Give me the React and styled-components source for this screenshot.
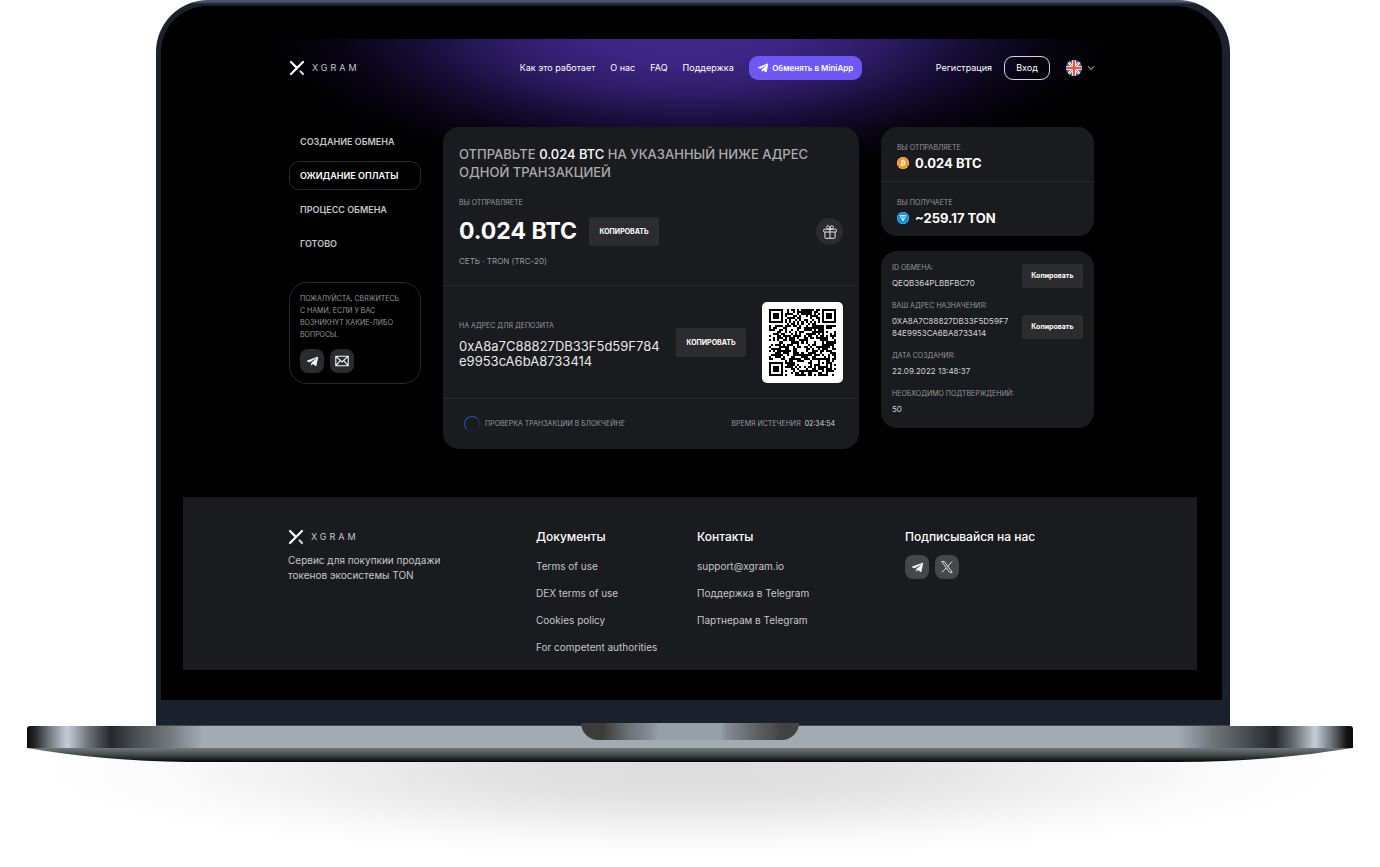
import React from "react";
import styled, { createGlobalStyle, css, keyframes } from "styled-components";
import { FaTelegramPlane, FaBitcoin } from "react-icons/fa";

const color = {
  panel: "#1a1b1e",
  control: "#2c2c2e",
  line: "#29292c",
  text: "#ffffff",
  soft: "#c6c6c8",
  muted: "#98989b",
  accent: "#6f57f6",
};

const GlobalStyle = createGlobalStyle`
  *, *::before, *::after { box-sizing: border-box; }
  body {
    margin: 0;
    background: #fff;
    color: ${color.text};
    font-family: Inter, "Open Sans", "Liberation Sans", sans-serif;
    font-size: 9px;
    line-height: 12px;
  }
  h1, h2, p, ul, dl, dd { margin: 0; padding: 0; }
  ul { list-style: none; }
  a { color: inherit; text-decoration: none; }
  button { font: inherit; color: inherit; border: 0; padding: 0; background: none; cursor: pointer; }
`;

/* Laptop */

const Page = styled.div`
  position: relative;
  padding: 0 27px 105px;
  overflow: hidden;
`;

const FloorShadow = styled.div`
  position: absolute;
  z-index: -1;
  left: 3%;
  right: 3%;
  bottom: 8px;
  height: 176px;
  background: radial-gradient(ellipse closest-side, #dcdcdc, #e2e2e2 30%, #efefef 58%, #fafafa 80%, #fff);
`;

const Lid = styled.div`
  margin: 0 123px 0 129px;
  padding: 6px 8px 25px 5px;
  border-radius: 52px 52px 0 0;
  background: linear-gradient(#4a5568, #4a5568 2px, #1a202c 4px);
  border-bottom: 1px solid #3f4859;
`;

const Screen = styled.div`
  padding: 33px 25px 30px 22px;
  border-radius: 46px 46px 0 0;
  background: #000;
`;

const Deck = styled.div`
  position: relative;
  height: 22px;
  border-radius: 3px 3px 0 0;
  background: linear-gradient(
    90deg,
    #0b0b0e 0, #25272a 8px, #6f777c 22px, #c5ced8 40px, #6b7176 62px, #25262a 84px,
    #4c5254 110px, #727779 142px, #838b94 154px, #a3abb2 176px,
    #a3abb2 calc(100% - 176px), #838b94 calc(100% - 154px), #727779 calc(100% - 142px),
    #4c5254 calc(100% - 110px), #25262a calc(100% - 78px), #6b7176 calc(100% - 58px),
    #c5ced8 calc(100% - 38px), #6f777c calc(100% - 22px), #111114 calc(100% - 6px), #0b0b0e 100%
  );
`;

const Notch = styled.div`
  position: absolute;
  top: -3px;
  left: 50%;
  width: 218px;
  height: 17px;
  transform: translateX(-50%);
  border-radius: 0 0 18px 18px;
  background: linear-gradient(90deg, #3d3c39 10%, #6c7276 22%, #838b94 31%, #96a1a7 36%, #96a1a7 64%, #838b94 67%, #5f6366 80%, #434345 92%);
`;

const Underside = styled.svg`
  display: block;
  width: 100%;
  height: 14px;
`;

/* Site shell */

const Site = styled.div`
  background: radial-gradient(
    ellipse 430px 150px at 50% -12px,
    #402889 0, #3c2584 25%, #2c1b64 46%, #160d36 65%, #080414 82%, #000 100%
  ) no-repeat;
`;

const Header = styled.header`
  display: flex;
  align-items: center;
  padding: 16px 102px 0 106px;
  height: 42px;
`;

const Logo = styled.a`
  display: flex;
  align-items: center;
  gap: 7px;
  font-size: 9px;
  letter-spacing: 3px;
  color: ${color.soft};
  svg { flex: none; }
`;

const Nav = styled.nav`
  display: flex;
  align-items: center;
  gap: 15px;
  margin: 0 auto 0 160px;
  white-space: nowrap;
`;

const MiniAppButton = styled.button`
  display: flex;
  align-items: center;
  justify-content: center;
  gap: 3px;
  width: 113px;
  height: 24px;
  border-radius: 9px;
  background: ${color.accent};
  font-size: 8px;
  font-weight: 600;
  white-space: nowrap;
`;

const Account = styled.div`
  display: flex;
  align-items: center;
  gap: 12px;
`;

const LoginButton = styled.button`
  width: 46px;
  height: 24px;
  border: 1px solid #d6d6d8;
  border-radius: 9px;
`;

const LanguageButton = styled.button`
  display: flex;
  align-items: center;
  gap: 5px;
  margin-left: 4px;
`;

const Main = styled.main`
  display: grid;
  grid-template-columns: 132px minmax(0, 1fr) 213px;
  gap: 22px;
  align-items: start;
  padding: 46px 103px 48px 106px;
`;

/* Steps */

const Steps = styled.ol`
  display: grid;
  gap: 5px;
  margin: 0 0 24px;
  padding: 0;
  list-style: none;
`;

const Step = styled.li`
  height: 29px;
  padding: 0 10px;
  border: 1px solid transparent;
  border-radius: 10px;
  line-height: 27px;
  font-weight: 600;
  color: ${color.soft};
  white-space: nowrap;
  ${(p) => p.$active && css`
    border-color: ${color.line};
    color: ${color.text};
  `}
`;

const ContactBox = styled.section`
  padding: 10px;
  border: 1px solid ${color.line};
  border-radius: 18px;
  font-size: 7px;
  color: ${color.muted};
`;

const IconRow = styled.div`
  display: flex;
  gap: 6px;
  margin-top: ${(p) => p.$top}px;
`;

const IconLink = styled.a`
  display: grid;
  place-items: center;
  width: 24px;
  height: 24px;
  border-radius: 8px;
  background: ${(p) => (p.$light ? "#464749" : color.control)};
  color: #f1f7f4;
`;

/* Cards */

const Card = styled.section`
  border-radius: 16px;
  background: ${color.panel};
`;

const CardPart = styled.div`
  padding: ${(p) => p.$pad};
  & + & { border-top: 1px solid ${color.line}; }
`;

const Label = styled.p`
  font-size: 7px;
  line-height: 12px;
  color: ${color.muted};
`;

const Instruction = styled.h1`
  margin-bottom: 16px;
  font-size: 13px;
  line-height: 18px;
  font-weight: 500;
  color: #acacae;
  strong { font-weight: 500; color: ${color.text}; }
`;

const AmountRow = styled.div`
  display: flex;
  align-items: center;
  gap: 12px;
  margin: 8px 0 9px;
`;

const Amount = styled.p`
  font-size: 23px;
  line-height: 29px;
  font-weight: 700;
`;

const CopyButton = styled.button`
  flex: none;
  width: ${(p) => (p.$small ? 61 : 70)}px;
  height: ${(p) => (p.$small ? 24 : 29)}px;
  border-radius: 2px;
  background: ${color.control};
  font-size: 7px;
  font-weight: 700;
`;

const GiftButton = styled.button`
  display: grid;
  place-items: center;
  width: 27px;
  height: 27px;
  margin-left: auto;
  border-radius: 50%;
  background: ${color.control};
`;

const Network = styled.p`
  font-size: 8px;
  color: ${color.muted};
`;

const DepositRow = styled.div`
  display: flex;
  align-items: center;
  gap: 16px;
`;

const Deposit = styled.div`
  flex: 1;
  min-width: 0;
  padding-top: 3px;
`;

const Address = styled.p`
  margin-top: 7px;
  font-size: 13px;
  line-height: 15px;
  overflow-wrap: anywhere;
  color: #e8e8e9;
`;

const QrFrame = styled.div`
  display: grid;
  place-items: center;
  width: 81px;
  height: 81px;
  border-radius: 5px;
  background: #fff;
`;

const StatusRow = styled.div`
  display: flex;
  align-items: center;
  gap: 5px;
  time { color: #d4d4d6; }
`;

const turn = keyframes`to { transform: rotate(360deg); }`;

const Spinner = styled.span`
  width: 16px;
  height: 16px;
  border-radius: 50%;
  border: 1px solid #1d57bd;
  border-bottom-color: #15233f;
  border-right-color: #1b3157;
  animation: ${turn} 12s linear infinite paused;
`;

const Timer = styled.div`
  display: flex;
  gap: 4px;
  margin-left: auto;
`;

const Aside = styled.aside`
  display: grid;
  gap: 15px;
`;

const CoinValue = styled.p`
  display: flex;
  align-items: center;
  gap: 6px;
  font-size: 13px;
  line-height: 18px;
  font-weight: 700;
`;

const CoinBadge = styled.span`
  display: grid;
  place-items: center;
  width: 12px;
  height: 12px;
  border-radius: 50%;
  background: #fff;
`;

const Details = styled.dl`
  display: grid;
  gap: 11px;
  padding: 11px 11px 13px;
`;

const Detail = styled.div`
  display: flex;
  align-items: ${(p) => (p.$tall ? "flex-end" : "center")};
  justify-content: space-between;
  height: ${(p) => (p.$tall ? 39 : 27)}px;
  dt { margin-bottom: 3px; font-size: 7px; color: ${color.muted}; white-space: nowrap; }
  dd { font-size: 8px; color: #d4d4d6; overflow-wrap: anywhere; }
`;

const DetailText = styled.div`
  flex: 0 1 119px;
`;

/* Footer */

const Footer = styled.footer`
  display: grid;
  grid-template-columns: 248px 161px 208px 1fr;
  padding: 32px 103px 9px 105px;
  background: ${color.panel};
`;

const About = styled.p`
  margin-top: 8px;
  font-size: 10px;
  line-height: 15px;
  color: ${color.soft};
`;

const FooterTitle = styled.h2`
  font-size: 12px;
  line-height: 16px;
  font-weight: 500;
`;

const FooterLinks = styled.ul`
  margin-top: 8px;
  font-size: 10px;
  line-height: 27px;
  color: ${color.soft};
`;

/* Drawings */

const LogoMark = () => (
  <svg width="16" height="16" viewBox="0 0 16 16" fill="none" stroke="#fff" strokeWidth="2.2" strokeLinecap="round" aria-hidden="true">
    <path d="M2 2l5.600 5.600M14 2L2 14" />
    <path d="M11.600 11.400l2.400 2.600" stroke="#d0d0d2" />
  </svg>
);

const FlagIcon = () => (
  <svg width="16" height="16" viewBox="0 0 16 16" aria-hidden="true">
    <clipPath id="flagRound"><circle cx="8" cy="8" r="8" /></clipPath>
    <g clipPath="url(#flagRound)">
      <path fill="#1c7cc0" d="M0 0h16v16H0z" />
      <path stroke="#fff" strokeWidth="2.6" d="M0 0l16 16M16 0L0 16" />
      <path stroke="#ef5340" strokeWidth=".9" d="M0 0l16 16M16 0L0 16" />
      <path stroke="#fff" strokeWidth="4" d="M8 0v16M0 8h16" />
      <path stroke="#ef5340" strokeWidth="2.4" d="M8 0v16M0 8h16" />
    </g>
  </svg>
);

const Chevron = () => (
  <svg width="8" height="6" viewBox="0 0 8 6" fill="none" stroke="#d6d6d8" aria-hidden="true">
    <path d="M1 1.200l3 3.200 3-3.200" />
  </svg>
);

const MailIcon = () => (
  <svg width="14" height="12" viewBox="0 0 14 12" fill="none" stroke="currentColor" strokeWidth="1.1" aria-hidden="true">
    <path d="M.8 1.200h12.400v9.600H.8zM.8 1.200L7 7l6.200-5.800M.8 10.800l4.400-5.200M13.200 10.800L8.800 5.600" />
  </svg>
);

const GiftIcon = () => (
  <svg width="14" height="14" viewBox="0 0 14 14" fill="none" stroke="#e6e6e8" strokeWidth="1" strokeLinejoin="round" aria-hidden="true">
    <rect x=".7" y="4.2" width="12.6" height="2.8" rx=".6" />
    <path d="M1.900 7v5.600a.7.7 0 0 0 .7.7h8.800a.7.7 0 0 0 .7-.7V7M7 4.200v9.100M7 4.200C5.600 4.200 3.600 3.700 3.600 2.300 3.600 1.300 4.300.7 5.100.7 6.500.7 7 2.500 7 4.200zM7 4.200c1.400 0 3.400-.5 3.400-1.900 0-1-.7-1.600-1.500-1.600C7.500.7 7 2.500 7 4.200z" />
  </svg>
);

const XIcon = () => (
  <svg width="12" height="12" viewBox="0 0 12 12" fill="none" stroke="currentColor" strokeWidth=".9" aria-hidden="true">
    <path d="M.8.600h2.600l7.800 10.800H8.600zM11 .6L6.500 5.600M5.300 6.800L1 11.400" />
  </svg>
);

const TonIcon = () => (
  <svg width="12" height="12" viewBox="0 0 12 12" aria-hidden="true">
    <circle cx="6" cy="6" r="6" fill="#0f93e0" />
    <path d="M3.100 3.500h5.800L6 8.900zM6 3.500v5.200" fill="none" stroke="#fff" strokeWidth=".8" strokeLinejoin="round" />
  </svg>
);

const QR_SIZE = 33;

const buildQrPath = () => {
  const finders = [[0, 0], [QR_SIZE - 7, 0], [0, QR_SIZE - 7]];
  let seed = 20259;
  let path = "";
  for (let y = 0; y < QR_SIZE; y += 1) {
    for (let x = 0; x < QR_SIZE; x += 1) {
      seed = (seed * 1103515245 + 12345) % 2147483648;
      let dark = seed / 2147483648 < 0.53;
      const finder = finders.find(([fx, fy]) => x >= fx - 1 && x <= fx + 7 && y >= fy - 1 && y <= fy + 7);
      if (finder) {
        const d = Math.max(Math.abs(x - finder[0] - 3), Math.abs(y - finder[1] - 3));
        dark = d === 3 || d <= 1;
      } else if (Math.abs(x - 26) <= 2 && Math.abs(y - 26) <= 2) {
        dark = Math.max(Math.abs(x - 26), Math.abs(y - 26)) !== 1;
      } else if (x === 6 || y === 6) {
        dark = (x + y) % 2 === 0;
      }
      if (dark) path += `M${x} ${y}h1v1h-1z`;
    }
  }
  return path;
};

const qrPath = buildQrPath();

const QrCode = () => (
  <svg width="67" height="67" viewBox="0 0 33 33" shapeRendering="crispEdges" role="img" aria-label="QR">
    <path d={qrPath} />
  </svg>
);

/* Content */

const steps = ["СОЗДАНИЕ ОБМЕНА", "ОЖИДАНИЕ ОПЛАТЫ", "ПРОЦЕСС ОБМЕНА", "ГОТОВО"];

const details = [
  { label: "ID ОБМЕНА:", value: "QEQB364PLBBFBC70", copy: true },
  { label: "ВАШ АДРЕС НАЗНАЧЕНИЯ:", value: "0XA8A7C88827DB33F5D59F784E9953CA6BA8733414", copy: true, tall: true },
  { label: "ДАТА СОЗДАНИЯ:", value: "22.09.2022 13:48:37" },
  { label: "НЕОБХОДИМО ПОДТВЕРЖДЕНИЙ:", value: "50" },
];

const footerColumns = [
  { title: "Документы", links: ["Terms of use", "DEX terms of use", "Cookies policy", "For competent authorities"] },
  { title: "Контакты", links: ["support@xgram.io", "Поддержка в Telegram", "Партнерам в Telegram"] },
];

const Brand = () => (
  <Logo href="#"><LogoMark />XGRAM</Logo>
);

export default function App() {
  return (
    <>
      <GlobalStyle />
      <Page>
        <FloorShadow />
        <Lid>
          <Screen>
            <Site>
              <Header>
                <Brand />
                <Nav>
                  <a href="#how">Как это работает</a>
                  <a href="#about">О нас</a>
                  <a href="#faq">FAQ</a>
                  <a href="#support">Поддержка</a>
                  <MiniAppButton><FaTelegramPlane size={12} />Обменять в MiniApp</MiniAppButton>
                </Nav>
                <Account>
                  <a href="#signup">Регистрация</a>
                  <LoginButton>Вход</LoginButton>
                  <LanguageButton aria-label="English"><FlagIcon /><Chevron /></LanguageButton>
                </Account>
              </Header>

              <Main>
                <div>
                  <Steps>
                    {steps.map((name, i) => <Step key={name} $active={i === 1}>{name}</Step>)}
                  </Steps>
                  <ContactBox>
                    <p>ПОЖАЛУЙСТА, СВЯЖИТЕСЬ<br />С НАМИ, ЕСЛИ У ВАС<br />ВОЗНИКНУТ КАКИЕ-ЛИБО<br />ВОПРОСЫ.</p>
                    <IconRow $top={8}>
                      <IconLink href="#telegram" aria-label="Telegram"><FaTelegramPlane size={13} /></IconLink>
                      <IconLink href="#mail" aria-label="Email"><MailIcon /></IconLink>
                    </IconRow>
                  </ContactBox>
                </div>

                <Card>
                  <CardPart $pad="18px 16px">
                    <Instruction>
                      ОТПРАВЬТЕ <strong>0.024 BTC</strong> НА УКАЗАННЫЙ НИЖЕ АДРЕС<br />ОДНОЙ ТРАНЗАКЦИЕЙ
                    </Instruction>
                    <Label>ВЫ ОТПРАВЛЯЕТЕ</Label>
                    <AmountRow>
                      <Amount>0.024 BTC</Amount>
                      <CopyButton>КОПИРОВАТЬ</CopyButton>
                      <GiftButton aria-label="Подарок"><GiftIcon /></GiftButton>
                    </AmountRow>
                    <Network>СЕТЬ · TRON (TRC-20)</Network>
                  </CardPart>
                  <CardPart $pad="16px 16px 15px">
                    <DepositRow>
                      <Deposit>
                        <Label>НА АДРЕС ДЛЯ ДЕПОЗИТА</Label>
                        <Address>0xA8a7C88827DB33F5d59F784<br />e9953cA6bA8733414</Address>
                      </Deposit>
                      <CopyButton>КОПИРОВАТЬ</CopyButton>
                      <QrFrame><QrCode /></QrFrame>
                    </DepositRow>
                  </CardPart>
                  <CardPart $pad="17px 24px 17px 21px">
                    <StatusRow>
                      <Spinner />
                      <Label>ПРОВЕРКА ТРАНЗАКЦИИ В БЛОКЧЕЙНЕ</Label>
                      <Timer>
                        <Label>ВРЕМЯ ИСТЕЧЕНИЯ</Label>
                        <Label as="time">02:34:54</Label>
                      </Timer>
                    </StatusRow>
                  </CardPart>
                </Card>

                <Aside>
                  <Card>
                    <CardPart $pad="15px 16px 9px">
                      <Label>ВЫ ОТПРАВЛЯЕТЕ</Label>
                      <CoinValue><CoinBadge><FaBitcoin size={12} color="#f7931a" /></CoinBadge>0.024 BTC</CoinValue>
                    </CardPart>
                    <CardPart $pad="15px 16px 9px">
                      <Label>ВЫ ПОЛУЧАЕТЕ</Label>
                      <CoinValue><CoinBadge><TonIcon /></CoinBadge>~259.17 TON</CoinValue>
                    </CardPart>
                  </Card>
                  <Card>
                    <Details>
                      {details.map((item) => (
                        <Detail key={item.label} $tall={item.tall}>
                          <DetailText>
                            <dt>{item.label}</dt>
                            <dd>{item.value}</dd>
                          </DetailText>
                          {item.copy && <CopyButton $small>Копировать</CopyButton>}
                        </Detail>
                      ))}
                    </Details>
                  </Card>
                </Aside>
              </Main>

              <Footer>
                <div>
                  <Brand />
                  <About>Сервис для покупкии продажи<br />токенов экосистемы TON</About>
                </div>
                {footerColumns.map((col) => (
                  <div key={col.title}>
                    <FooterTitle>{col.title}</FooterTitle>
                    <FooterLinks>
                      {col.links.map((link) => <li key={link}><a href="#">{link}</a></li>)}
                    </FooterLinks>
                  </div>
                ))}
                <div>
                  <FooterTitle>Подписывайся на нас</FooterTitle>
                  <IconRow $top={10}>
                    <IconLink $light href="#telegram" aria-label="Telegram"><FaTelegramPlane size={13} /></IconLink>
                    <IconLink $light href="#x" aria-label="X"><XIcon /></IconLink>
                  </IconRow>
                </div>
              </Footer>
            </Site>
          </Screen>
        </Lid>
        <Deck><Notch /></Deck>
        <Underside viewBox="0 0 1326 14" preserveAspectRatio="none" aria-hidden="true">
          <linearGradient id="under" x1="0" y1="0" x2="0" y2="1">
            <stop offset="0" stopColor="#71787c" />
            <stop offset=".5" stopColor="#43484a" />
            <stop offset="1" stopColor="#050507" />
          </linearGradient>
          <path d="M0 0h1326Q1240 14 1150 14H160Q76 13 0 0z" fill="url(#under)" />
        </Underside>
      </Page>
    </>
  );
}
